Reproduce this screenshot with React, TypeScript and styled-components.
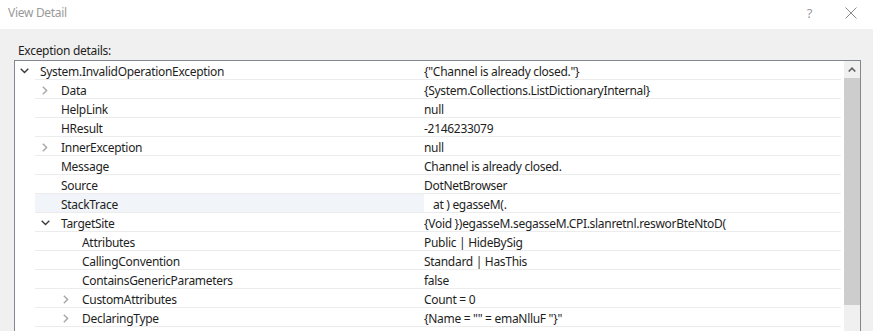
import styled, { createGlobalStyle } from "styled-components";

interface Node {
  name: string;
  value: string;
  level: number;
  toggle?: "open" | "closed";
  selected?: boolean;
}

const nodes: Node[] = [
  { name: "System.InvalidOperationException", value: '{"Channel is already closed."}', level: 0, toggle: "open" },
  { name: "Data", value: "{System.Collections.ListDictionaryInternal}", level: 1, toggle: "closed" },
  { name: "HelpLink", value: "null", level: 1 },
  { name: "HResult", value: "-2146233079", level: 1 },
  { name: "InnerException", value: "null", level: 1, toggle: "closed" },
  { name: "Message", value: "Channel is already closed.", level: 1 },
  { name: "Source", value: "DotNetBrowser", level: 1 },
  { name: "StackTrace", value: "at ) egasseM(.", level: 1, selected: true },
  { name: "TargetSite", value: "{Void })egasseM.segasseM.CPI.slanretnl.resworBteNtoD(", level: 1, toggle: "open" },
  { name: "Attributes", value: "Public | HideBySig", level: 2 },
  { name: "CallingConvention", value: "Standard | HasThis", level: 2 },
  { name: "ContainsGenericParameters", value: "false", level: 2 },
  { name: "CustomAttributes", value: "Count = 0", level: 2, toggle: "closed" },
  { name: "DeclaringType", value: '{Name = "" = emaNlluF "}"', level: 2, toggle: "closed" },
];

const GlobalStyle = createGlobalStyle`
  html, body {
    margin: 0;
    padding: 0;
    background: #f0f0f0;
  }
  body {
    font-family: "Segoe UI", "Noto Sans", sans-serif;
    font-size: 12px;
    letter-spacing: -0.3px;
    color: #1e1e1e;
  }
`;

const Window = styled.div`
  width: 873px;
  height: 331px;
  display: flex;
  flex-direction: column;
  overflow: hidden;
  background: #f0f0f0;
`;

const TitleBar = styled.div`
  height: 29px;
  flex-shrink: 0;
  background: #ffffff;
  display: flex;
  align-items: flex-start;
  padding: 4px 16px 0 8px;
  box-sizing: border-box;
`;

const Title = styled.div`
  flex: 1;
  color: #9a9a9a;
  line-height: 17px;
`;

const TitleButtons = styled.div`
  display: flex;
  align-items: center;
  gap: 33px;
  height: 14px;
  margin-top: 2px;
`;

const Help = styled.span`
  color: #9a9a9a;
  font-size: 13px;
  line-height: 14px;
`;

const Body = styled.div`
  flex: 1;
  min-height: 0;
  display: flex;
  flex-direction: column;
  padding: 14px 12px 0 14px;
`;

const Label = styled.div`
  line-height: 16px;
  padding-left: 4px;
  margin-bottom: 1px;
`;

const TreeBox = styled.div`
  flex: 1;
  min-height: 0;
  display: flex;
  border: 1px solid #828790;
  border-bottom: none;
  background: #ffffff;
`;

const Rows = styled.div`
  flex: 1;
  padding-right: 3px;
`;

const Row = styled.div`
  display: grid;
  grid-template-columns: 409px 1fr;
  height: 19px;
  background: linear-gradient(#ececec, #ececec) no-repeat 20px 100% / calc(100% - 20px) 1px;
`;

const NameCell = styled.div<{ $level: number; $selected?: boolean }>`
  display: flex;
  align-items: center;
  padding-left: ${(p) => 3 + p.$level * 21}px;
  gap: 10px;
  white-space: nowrap;
  ${(p) =>
    p.$selected &&
    `background: linear-gradient(to right, transparent 20px, #f1f4f9 20px) no-repeat 0 0 / 100% 18px;`}
`;

const Toggle = styled.span`
  width: 12px;
  height: 18px;
  display: flex;
  align-items: center;
  justify-content: center;
  flex-shrink: 0;
`;

const ValueCell = styled.div<{ $selected?: boolean }>`
  display: flex;
  align-items: center;
  white-space: nowrap;
  overflow: hidden;
  padding-left: ${(p) => (p.$selected ? 9 : 0)}px;
`;

const Text = styled.span`
  line-height: 18px;
  padding-top: 2px;
`;

const ScrollBar = styled.div`
  width: 16px;
  flex-shrink: 0;
  display: flex;
  flex-direction: column;
  background: #f0f0f0;
`;

const ArrowButton = styled.div`
  height: 17px;
  display: flex;
  align-items: center;
  justify-content: center;
`;

const Thumb = styled.div`
  height: 227px;
  background: #cdcdcd;
`;

const Chevron = ({ open }: { open: boolean }) =>
  open ? (
    <svg width="9" height="6" viewBox="0 0 9 6">
      <path d="M0.7 0.8 L4.5 4.6 L8.3 0.8" fill="none" stroke="#3c3c3c" strokeWidth="1.4" />
    </svg>
  ) : (
    <svg width="6" height="9" viewBox="0 0 6 9">
      <path d="M0.8 0.7 L4.6 4.5 L0.8 8.3" fill="none" stroke="#a6a6a6" strokeWidth="1.4" />
    </svg>
  );

const App = () => {
  return (
    <>
      <GlobalStyle />
      <Window>
        <TitleBar>
          <Title>View Detail</Title>
          <TitleButtons>
            <Help>?</Help>
            <svg width="12" height="12" viewBox="0 0 12 12">
              <path d="M0.5 0.5 L11.5 11.5 M11.5 0.5 L0.5 11.5" stroke="#8a8a8a" strokeWidth="1" />
            </svg>
          </TitleButtons>
        </TitleBar>
        <Body>
          <Label>Exception details:</Label>
          <TreeBox>
            <Rows>
              {nodes.map((n) => (
                <Row key={n.name}>
                  <NameCell $level={n.level} $selected={n.selected}>
                    <Toggle>{n.toggle && <Chevron open={n.toggle === "open"} />}</Toggle>
                    <Text>{n.name}</Text>
                  </NameCell>
                  <ValueCell $selected={n.selected}>
                    <Text>{n.value}</Text>
                  </ValueCell>
                </Row>
              ))}
            </Rows>
            <ScrollBar>
              <ArrowButton>
                <svg width="8" height="5" viewBox="0 0 8 5">
                  <path d="M0.7 4.5 L4 1.2 L7.3 4.5" fill="none" stroke="#606060" strokeWidth="1.6" />
                </svg>
              </ArrowButton>
              <Thumb />
            </ScrollBar>
          </TreeBox>
        </Body>
      </Window>
    </>
  );
};

export default App;
